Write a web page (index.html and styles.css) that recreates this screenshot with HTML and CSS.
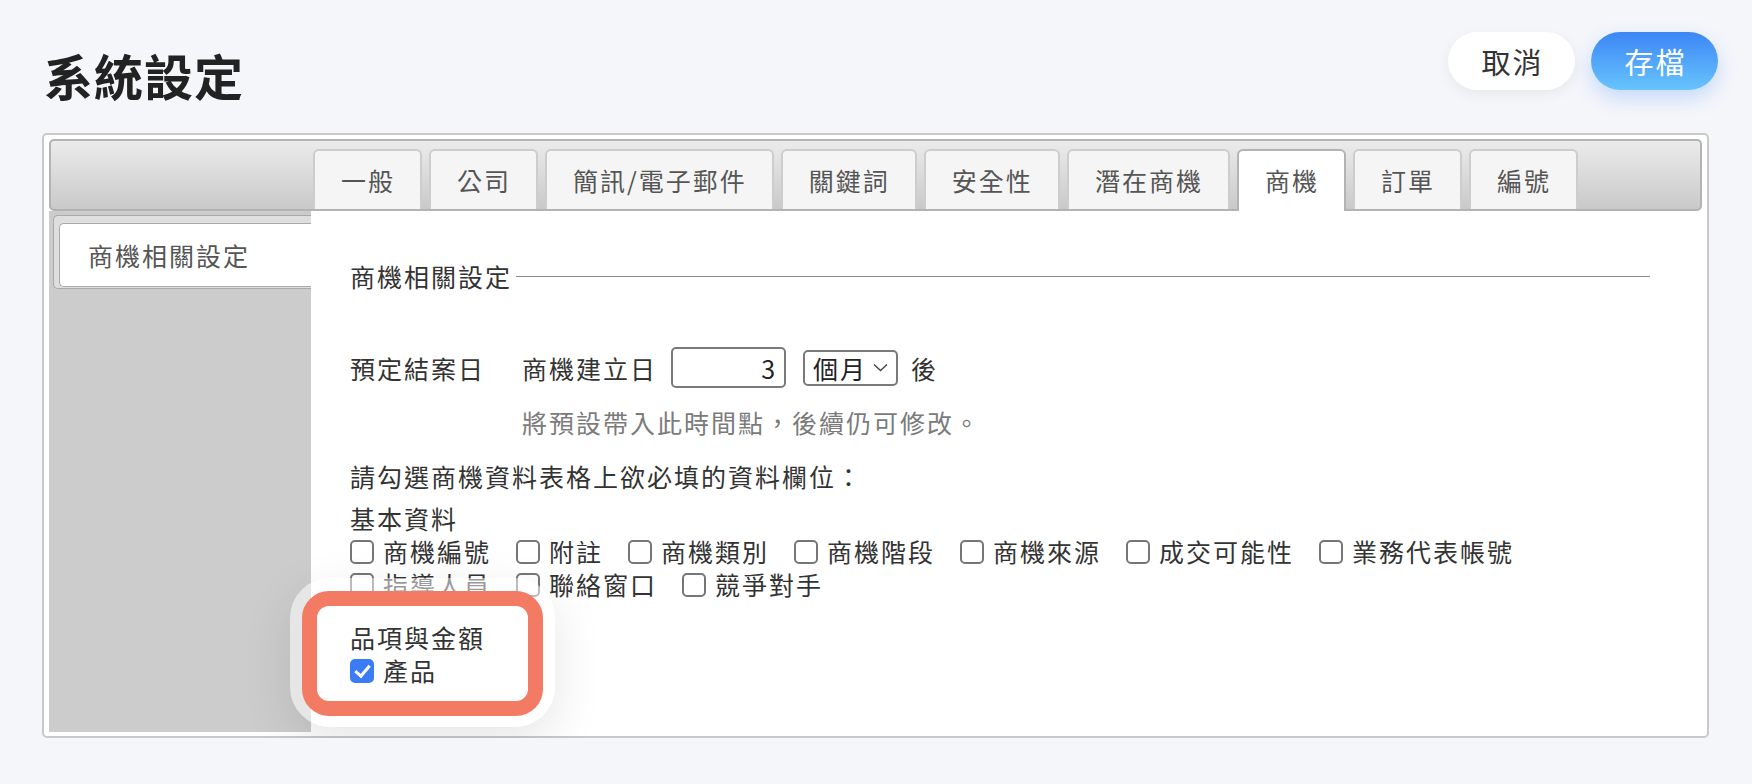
FILE: index.html
```html
<!DOCTYPE html>
<html lang="zh-Hant">
<head>
    <meta charset="UTF-8">
    <meta name="viewport" content="width=device-width, initial-scale=1.0">
    <title>系統設定</title>
    <link rel="stylesheet" href="styles.css">
</head>
<body>
    <header class="head">
        <h1 class="title">系統設定</h1>
        <div class="actions">
            <button class="btn btn-cancel">取消</button>
            <button class="btn btn-save">存檔</button>
        </div>
    </header>

    <div class="panel">
        <nav class="tabbar">
            <a class="tab">一般</a>
            <a class="tab">公司</a>
            <a class="tab">簡訊/電子郵件</a>
            <a class="tab">關鍵詞</a>
            <a class="tab">安全性</a>
            <a class="tab">潛在商機</a>
            <a class="tab active">商機</a>
            <a class="tab">訂單</a>
            <a class="tab">編號</a>
        </nav>

        <div class="panel-body">
            <aside class="side">
                <div class="side-list">
                    <div class="side-item">商機相關設定</div>
                </div>
            </aside>

            <section class="content">
                <div class="legend">
                    <span>商機相關設定</span>
                    <i class="legend-line"></i>
                </div>

                <div class="form-row">
                    <span class="label">預定結案日</span>
                    <span>商機建立日</span>
                    <input class="num" type="text" value="3">
                    <span class="select">個月
                        <svg width="15" height="9" viewBox="0 0 15 9"><path d="M1 1.5l6.5 6 6.5-6" fill="none" stroke="#444" stroke-width="1.4"/></svg>
                    </span>
                    <span>後</span>
                </div>
                <div class="hint">將預設帶入此時間點，後續仍可修改。</div>

                <p class="ask">請勾選商機資料表格上欲必填的資料欄位：</p>

                <div class="group">
                    <div class="group-title">基本資料</div>
                    <div class="checks">
                        <label class="check"><input type="checkbox">商機編號</label>
                        <label class="check"><input type="checkbox">附註</label>
                        <label class="check"><input type="checkbox">商機類別</label>
                        <label class="check"><input type="checkbox">商機階段</label>
                        <label class="check"><input type="checkbox">商機來源</label>
                        <label class="check"><input type="checkbox">成交可能性</label>
                        <label class="check"><input type="checkbox">業務代表帳號</label>
                    </div>
                    <div class="checks">
                        <label class="check"><input type="checkbox">指導人員</label>
                        <label class="check"><input type="checkbox">聯絡窗口</label>
                        <label class="check"><input type="checkbox">競爭對手</label>
                    </div>
                </div>

                <div class="group group-focus">
                    <div class="group-title">品項與金額</div>
                    <div class="checks">
                        <label class="check"><input type="checkbox" checked>產品</label>
                    </div>
                    <span class="halo"></span>
                    <span class="ring"></span>
                </div>
            </section>
        </div>
    </div>
</body>
</html>
```

FILE: styles.css
```css
body {
    margin: 0;
    background: #f5f6fa;
    font-family: "Noto Sans CJK TC", "Noto Sans", sans-serif;
    color: #333;
}

/* header */
.head {
    box-sizing: border-box;
    height: 133px;
    padding: 32px 34px 0 44px;
    display: flex;
    justify-content: space-between;
    align-items: flex-start;
}
.title {
    margin: 14px 0 0;
    font-size: 49px;
    line-height: 58px;
    font-weight: 700;
    color: #222;
    letter-spacing: 1px;
}
.actions {
    display: flex;
    gap: 16px;
}
.btn {
    width: 127px;
    height: 58px;
    border: none;
    border-radius: 29px;
    font-family: inherit;
    font-size: 29px;
    letter-spacing: 2px;
    padding: 0 0 0 2px;
    cursor: pointer;
}
.btn-cancel {
    background: #fff;
    color: #333;
    box-shadow: 0 4px 14px rgba(0, 0, 0, 0.06);
}
.btn-save {
    background: linear-gradient(#3c86f6, #67c4fc);
    color: #fff;
    box-shadow: 0 8px 20px rgba(70, 140, 250, 0.28);
}

/* panel */
.panel {
    box-sizing: border-box;
    height: 605px;
    margin: 0 43px 0 42px;
    padding: 4px 5px;
    background: #fff;
    border: 2px solid #c9c9c9;
    border-radius: 5px;
}
.tabbar {
    box-sizing: border-box;
    height: 72px;
    padding-left: 262px;
    display: flex;
    align-items: flex-end;
    background: linear-gradient(#ebebeb, #c9c9c9);
    border: 2px solid #b3b3b3;
    border-radius: 5px;
}
.tab {
    box-sizing: border-box;
    height: 60px;
    margin-right: 7px;
    padding: 0 25px 0 26px;
    background: #f5f5f5;
    border: 2px solid #cdcdcd;
    border-bottom: none;
    border-radius: 6px 6px 0 0;
    font-size: 25px;
    line-height: 58px;
    letter-spacing: 2px;
    color: #555;
    cursor: pointer;
}
.tab.active {
    height: 62px;
    margin-bottom: -2px;
    background: #fff;
    border-color: #b3b3b3;
    position: relative;
}

.panel-body {
    display: flex;
    height: 521px;
}
.side {
    width: 262px;
    flex: none;
    background: #ccc;
    padding: 4px 0 0 4px;
    box-sizing: border-box;
}
.side-list {
    padding: 7px 0 1px 5px;
    background: #dedede;
    border: 1px solid #a9a9a9;
    border-right: none;
    border-radius: 5px 0 0 5px;
}
.side-item {
    box-sizing: border-box;
    height: 64px;
    padding-left: 28px;
    background: #fff;
    border: 1px solid #a9a9a9;
    border-right: none;
    border-radius: 5px 0 0 5px;
    font-size: 25px;
    line-height: 62px;
    letter-spacing: 2px;
    color: #555;
}

/* content */
.content {
    flex: 1;
    padding: 48px 52px 0 39px;
    font-size: 25px;
    letter-spacing: 2px;
}
.legend {
    display: flex;
    align-items: center;
    line-height: 34px;
}
.legend-line {
    flex: 1;
    margin-left: 4px;
    border-top: 1px solid #8c8c8c;
}
.form-row {
    display: flex;
    align-items: center;
    height: 41px;
    margin-top: 54px;
}
.label {
    width: 172px;
}
.num {
    box-sizing: border-box;
    width: 115px;
    height: 41px;
    margin: 0 17px 0 14px;
    padding: 0 9px 0 0;
    border: 2px solid #7a7a7a;
    border-radius: 5px;
    font-family: inherit;
    font-size: 25px;
    color: #222;
    text-align: right;
}
.select {
    box-sizing: border-box;
    width: 95px;
    height: 36px;
    margin-right: 13px;
    padding: 0 8px 0 8px;
    display: flex;
    align-items: center;
    justify-content: space-between;
    border: 2px solid #7a7a7a;
    border-radius: 5px;
    color: #222;
    line-height: 32px;
}
.hint {
    margin-top: 17px;
    padding-left: 172px;
    line-height: 34px;
    color: #7b7b7b;
}
.ask {
    margin: 20px 0 0;
    line-height: 34px;
}
.group {
    margin-top: 9px;
    line-height: 33px;
}
.checks {
    display: flex;
    gap: 25px;
}
.check {
    display: inline-flex;
    align-items: center;
}
.check input {
    appearance: none;
    box-sizing: border-box;
    width: 24px;
    height: 24px;
    margin: 0 9px 0 0;
    border: 2px solid #767676;
    border-radius: 5px;
    background: #fff;
    position: relative;
}
.check input:checked {
    background: #3b7cf6;
    border-color: #3b7cf6;
}
.check input:checked::after {
    content: "";
    position: absolute;
    left: 6px;
    top: 1px;
    width: 6px;
    height: 12px;
    border-right: 3px solid #fff;
    border-bottom: 3px solid #fff;
    transform: rotate(40deg);
}

/* highlighted section */
.group-focus {
    margin-top: 20px;
    position: relative;
}
.halo {
    position: absolute;
    left: -60px;
    top: -43px;
    width: 265px;
    height: 149px;
    box-sizing: border-box;
    border: 13px solid rgba(255, 255, 255, 0.5);
    border-radius: 40px;
    box-shadow: 0 16px 50px rgba(0, 0, 0, 0.1);
    pointer-events: none;
}
.ring {
    position: absolute;
    left: -48px;
    top: -30px;
    width: 241px;
    height: 125px;
    box-sizing: border-box;
    border: 15px solid #f37b63;
    border-radius: 27px;
    pointer-events: none;
}
```
